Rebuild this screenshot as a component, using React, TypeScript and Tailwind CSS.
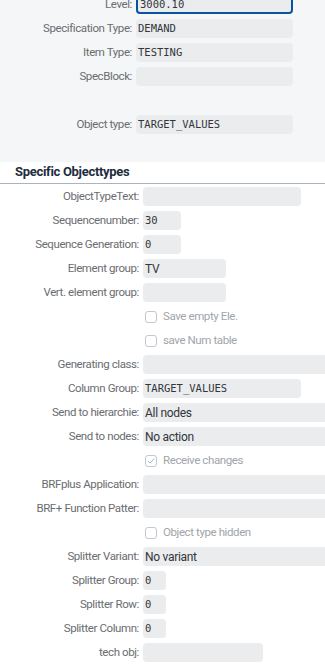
import React from "react";

const labelFont = { fontFamily: '"Roboto", "Liberation Sans", sans-serif' };
const monoFont = { fontFamily: '"DejaVu Sans Mono", "Liberation Mono", monospace' };

type FieldProps = {
    label: string;
    value?: string;
    mono?: boolean;
    width: string;
    labelWidth: string;
    focused?: boolean;
};

const Field = ({ label, value, mono, width, labelWidth, focused }: FieldProps) => (
    <div className="flex items-center h-[19px] shrink-0">
        <div className={`${labelWidth} shrink-0 text-right pr-[4px] text-[11.5px] tracking-[-0.4px] text-[#6a6d70] whitespace-nowrap leading-none`}>{label}</div>
        <div
            className={`${width} shrink-0 h-[19px] rounded-[4px] bg-[#ebecee] flex items-center pl-[2px] overflow-hidden ${focused ? "border-2 border-[#0854a0] pl-[1px]" : ""}`}
        >
            {value && (
                <span
                    className={`${mono ? "text-[10.5px]" : "text-[12px] tracking-[-0.3px]"} text-[#32363a] leading-none whitespace-nowrap`}
                    style={mono ? monoFont : labelFont}
                >
                    {value}
                </span>
            )}
        </div>
    </div>
);

const Check = ({ label, checked }: { label: string; checked?: boolean }) => (
    <div className="flex items-center h-[19px] shrink-0 pl-[145px]">
        <div className="w-[12px] h-[12px] rounded-[3px] border border-[#c2c8ce] bg-white flex items-center justify-center">
            {checked && (
                <svg viewBox="0 0 12 12" className="w-[10px] h-[10px]">
                    <path d="M2.5 6.2 L5 8.6 L9.6 3.2" fill="none" stroke="#8fb3d9" strokeWidth="1.2" />
                </svg>
            )}
        </div>
        <span className="ml-[6px] text-[11.5px] tracking-[-0.4px] text-[#a0a5aa] leading-none whitespace-nowrap">{label}</span>
    </div>
);

const App = () => {
    const top = "w-[136px]";
    const low = "w-[143px]";
    return (
        <div className="w-[325px] h-[669px] overflow-hidden bg-white" style={labelFont}>
            {/* header fields */}
            <div className="h-[162px] bg-[#f5f6f7] overflow-hidden">
                <div className="-mt-[5px] flex flex-col gap-[5px]">
                    <Field label="Level:" value="3000.10" mono focused labelWidth={top} width="w-[157px]" />
                    <Field label="Specification Type:" value="DEMAND" mono labelWidth={top} width="w-[157px]" />
                    <Field label="Item Type:" value="TESTING" mono labelWidth={top} width="w-[157px]" />
                    <Field label="SpecBlock:" labelWidth={top} width="w-[157px]" />
                    <div className="h-[19px]" />
                    <Field label="Object type:" value="TARGET_VALUES" mono labelWidth={top} width="w-[157px]" />
                </div>
            </div>

            {/* section title */}
            <div className="h-[22px] border-b border-[#a9b4be] flex items-center pl-[15px] pb-[2px]">
                <span className="text-[13px] tracking-[-0.3px] font-bold text-[#1d2d3e]">Specific Objecttypes</span>
            </div>

            <div className="pt-[3px] flex flex-col gap-[5px]">
                <Field label="ObjectTypeText:" labelWidth={low} width="w-[158px]" />
                <Field label="Sequencenumber:" value="30" mono labelWidth={low} width="w-[38px]" />
                <Field label="Sequence Generation:" value="0" mono labelWidth={low} width="w-[38px]" />
                <Field label="Element group:" value="TV" labelWidth={low} width="w-[83px]" />
                <Field label="Vert. element group:" labelWidth={low} width="w-[83px]" />
                <Check label="Save empty Ele." />
                <Check label="save Num table" />
                <Field label="Generating class:" labelWidth={low} width="w-[200px]" />
                <Field label="Column Group:" value="TARGET_VALUES" mono labelWidth={low} width="w-[158px]" />
                <Field label="Send to hierarchie:" value="All nodes" labelWidth={low} width="w-[200px]" />
                <Field label="Send to nodes:" value="No action" labelWidth={low} width="w-[200px]" />
                <Check label="Receive changes" checked />
                <Field label="BRFplus Application:" labelWidth={low} width="w-[200px]" />
                <Field label="BRF+ Function Patter:" labelWidth={low} width="w-[200px]" />
                <Check label="Object type hidden" />
                <Field label="Splitter Variant:" value="No variant" labelWidth={low} width="w-[200px]" />
                <Field label="Splitter Group:" value="0" mono labelWidth={low} width="w-[23px]" />
                <Field label="Splitter Row:" value="0" mono labelWidth={low} width="w-[23px]" />
                <Field label="Splitter Column:" value="0" mono labelWidth={low} width="w-[23px]" />
                <Field label="tech obj:" labelWidth={low} width="w-[120px]" />
            </div>
        </div>
    );
};

export default App;
